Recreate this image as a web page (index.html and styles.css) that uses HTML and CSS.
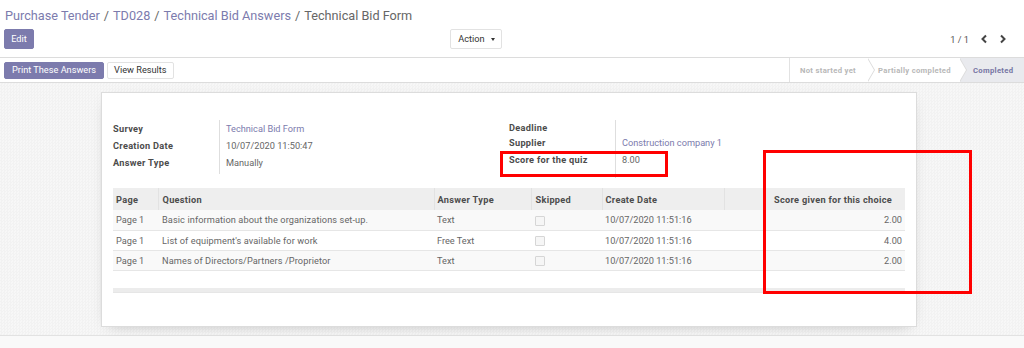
FILE: index.html
```html
<!DOCTYPE html>
<html>
<head>
<meta charset="utf-8">
<link rel="stylesheet" href="styles.css">
</head>
<body>
<div class="cp">
  <ol class="breadcrumb">
    <li><a>Purchase Tender</a></li>
    <li class="sep">/</li>
    <li><a>TD028</a></li>
    <li class="sep">/</li>
    <li><a>Technical Bid Answers</a></li>
    <li class="sep">/</li>
    <li class="active">Technical Bid Form</li>
  </ol>
  <div class="cp-row">
    <div class="cp-left"><button class="btn btn-primary btn-edit">Edit</button></div>
    <button class="btn btn-secondary btn-action">Action <span class="caret"></span></button>
    <div class="pager">
      <span class="pager-value">1 / 1</span>
      <svg class="chev" width="8" height="10" viewBox="0 0 8 10"><polyline points="6,1.5 2.5,5 6,8.5" fill="none" stroke="#444" stroke-width="2"/></svg>
      <svg class="chev" width="8" height="10" viewBox="0 0 8 10"><polyline points="2,1.5 5.5,5 2,8.5" fill="none" stroke="#444" stroke-width="2"/></svg>
    </div>
  </div>
</div>
<div class="statusbar">
  <div class="sb-buttons">
    <button class="btn btn-primary btn-sm">Print These Answers</button>
    <button class="btn btn-secondary btn-sm btn-results">View Results</button>
  </div>
  <div class="sb-status">
    <span class="arrow first">Not started yet</span>
    <span class="arrow second">Partially completed</span>
    <span class="arrow current">Completed</span>
  </div>
</div>
<div class="form-bg">
  <div class="sheet">
    <div class="groups">
      <div class="group">
        <div class="grow h17"><div class="lbl">Survey</div><div class="val link">Technical Bid Form</div></div>
        <div class="grow h17"><div class="lbl">Creation Date</div><div class="val">10/07/2020 11:50:47</div></div>
        <div class="grow h17"><div class="lbl">Answer Type</div><div class="val">Manually</div></div>
        <div class="grow h3"><div class="lbl"></div><div class="val"></div></div>
      </div>
      <div class="group">
        <div class="grow h14"><div class="lbl">Deadline</div><div class="val"></div></div>
        <div class="grow h16"><div class="lbl">Supplier</div><div class="val link">Construction company 1</div></div>
        <div class="grow h18"><div class="lbl">Score for the quiz</div><div class="val">8.00</div></div>
        <div class="grow h10"><div class="lbl"></div><div class="val"></div></div>
      </div>
    </div>
    <table class="list">
      <colgroup>
        <col class="c-page"><col class="c-question"><col class="c-type"><col class="c-skip"><col class="c-date"><col class="c-blank"><col>
      </colgroup>
      <thead>
        <tr><th>Page</th><th>Question</th><th>Answer Type</th><th>Skipped</th><th>Create Date</th><th></th><th class="noline">Score given for this choice</th></tr>
      </thead>
      <tbody>
        <tr><td>Page 1</td><td>Basic information about the organizations set-up.</td><td>Text</td><td><span class="cb"></span></td><td>10/07/2020 11:51:16</td><td></td><td class="num">2.00</td></tr>
        <tr><td>Page 1</td><td>List of equipment's available for work</td><td>Free Text</td><td><span class="cb"></span></td><td>10/07/2020 11:51:16</td><td></td><td class="num">4.00</td></tr>
        <tr><td>Page 1</td><td>Names of Directors/Partners /Proprietor</td><td>Text</td><td><span class="cb"></span></td><td>10/07/2020 11:51:16</td><td></td><td class="num">2.00</td></tr>
        <tr class="empty"><td colspan="7"></td></tr>
      </tbody>
      <tfoot><tr><td colspan="7"></td></tr></tfoot>
    </table>
  </div>
</div>
<div class="below"></div>
<div class="mark mark-quiz"></div>
<div class="mark mark-score"></div>
</body>
</html>
```
FILE: styles.css
```css
* { box-sizing: border-box; }
html, body { margin: 0; padding: 0; }
body {
  width: 1024px;
  height: 348px;
  overflow: hidden;
  font-family: Roboto, "Liberation Sans", sans-serif;
  font-size: 9.2px;
  color: #666;
  background: #f9f9f9;
  position: relative;
}
th, .lbl { letter-spacing: 0.3px; }
.list td:nth-child(2) { letter-spacing: 0.1px; }
.cp {
  background: #fff;
  height: 58px;
  border-bottom: 1px solid #dcdcdc;
  padding: 5px 4px 0 4px;
}
.breadcrumb {
  list-style: none;
  margin: 0;
  padding: 0 0 0 1px;
  display: flex;
  height: 20px;
  align-items: center;
  font-size: 12.7px;
}
.breadcrumb li { color: #666; }
.breadcrumb li a { color: #7c7bad; }
.breadcrumb .sep { padding: 0 4px; color: #666; }
.cp-row {
  display: flex;
  align-items: center;
  margin-top: 4px;
  height: 20px;
}
.cp-left { width: 446px; }
.btn {
  font-family: inherit;
  font-size: 9.2px;
  border-radius: 2px;
  border: 1px solid transparent;
  padding: 0 6px;
  line-height: 1;
  cursor: pointer;
}
.btn-primary { background: #7c7bad; color: #fff; border-color: #7c7bad; }
.btn-secondary { background: #fff; color: #333; border-color: #e2e2e2; }
.btn-edit { height: 20px; width: 30px; padding: 0; }
.btn-action { height: 20px; width: 52px; padding: 0 0 0 1px; display: flex; align-items: center; justify-content: center; gap: 6px; }
.caret {
  width: 0; height: 0;
  border-left: 2.5px solid transparent;
  border-right: 2.5px solid transparent;
  border-top: 3px solid #333;
}
.pager {
  margin-left: auto;
  display: flex;
  align-items: center;
  padding-right: 13px;
  color: #555;
}
.pager-value { margin-right: 11px; }
.chev { display: block; }
.chev + .chev { margin-left: 11px; }

.statusbar {
  display: flex;
  align-items: center;
  height: 25px;
  background: #fff;
  border-bottom: 1px solid #dcdcdc;
  padding-left: 4px;
}
.sb-buttons { display: flex; gap: 3px; }
.btn-sm { height: 17px; padding: 0 7px; }
.btn-results { padding: 0 6px; }
.sb-status {
  margin-left: auto;
  display: flex;
  height: 24px;
  align-self: flex-start;
}
.arrow {
  position: relative;
  display: flex;
  align-items: center;
  height: 24px;
  font-size: 7.7px;
  font-weight: bold;
  letter-spacing: 0.3px;
  color: #b8b8b8;
  background: #fff;
}
.arrow.first { border-left: 1px solid #e2e2e2; width: 79px; padding-left: 10px; }
.arrow.second { width: 92px; padding-left: 10px; }
.arrow.current { flex: 1; width: 64px; background: #e9eaee; color: #7675a3; padding-left: 13px; }
.arrow.first::before, .arrow.first::after,
.arrow.second::before, .arrow.second::after {
  content: "";
  position: absolute;
  top: 0;
  height: 24px;
  width: 7px;
  clip-path: polygon(0 0, 100% 50%, 0 100%);
}
.arrow.first::before, .arrow.second::before { right: -7px; background: #dcdcdc; z-index: 1; }
.arrow.first::after, .arrow.second::after { right: -6px; background: #fff; z-index: 2; }

.form-bg {
  height: 253px;
  border-bottom: 1px solid #e2e2e2;
  background-color: #f4f4f4;
  background-image: repeating-conic-gradient(#f2f2f2 0 25%, #f7f7f7 0 50%);
  background-size: 3px 3px;
  padding: 9px 0 0 101px;
}
.sheet {
  width: 816px;
  height: 235px;
  background: #fff;
  border: 1px solid #dcdcdc;
  box-shadow: 0 4px 14px -8px rgba(0,0,0,0.35);
  padding: 27px 10px 0 11px;
}
.groups {
  display: grid;
  grid-template-columns: 396px 396px;
}
.grow { display: flex; }
.lbl {
  width: 107px;
  border-right: 1px solid #dedede;
  font-weight: bold;
  color: #4c4c4c;
  display: flex;
  align-items: center;
}
.val {
  padding-left: 6px;
  display: flex;
  align-items: center;
}
.link { color: #7c7bad; }
.h17 { height: 17px; }
.h14 { height: 14px; }
.h16 { height: 16px; }
.h18 { height: 18px; }
.h10 { height: 10px; }
.h3 { height: 3px; }

.list {
  margin-top: 10px;
  width: 792px;
  border-collapse: collapse;
  table-layout: fixed;
}
.c-page { width: 45px; }
.c-question { width: 276px; }
.c-type { width: 97px; }
.c-skip { width: 71px; }
.c-date { width: 122px; }
.c-blank { width: 44px; }
.list th {
  height: 22px;
  background: #eeeeee;
  text-align: left;
  font-weight: bold;
  color: #4c4c4c;
  padding: 0 3px;
  border-left: 1px solid #e2e2e2;
  white-space: nowrap;
}
.list th:first-child { border-left: none; }
.list th.noline { border-left: none; padding-left: 6px; }
.list td {
  height: 20px;
  padding: 0 3px;
  border-bottom: 1px solid #e6e6e6;
  white-space: nowrap;
}
.list th:nth-child(2), .list td:nth-child(2) { padding-left: 4px; }
.list td:nth-child(4), .list th:nth-child(4) { padding-left: 4px; }
.list tbody tr:nth-child(odd) td { background: #f9f9f9; }
.list tbody tr.empty td { height: 18px; border-bottom: none; background: #fff; }
.list tfoot td { height: 4px; padding: 0; background: #ececec; }
.list td.num { text-align: right; padding-right: 3px; }
.cb {
  display: inline-block;
  width: 10px;
  height: 10px;
  border: 1px solid #d6d6d6;
  background: #f6f6f6;
  border-radius: 1px;
  vertical-align: middle;
}
.below { height: 12px; background: #f9f9f9; }

.mark {
  position: absolute;
  border: 3px solid #f00;
}
.mark-quiz { left: 500px; top: 151px; width: 168px; height: 26px; }
.mark-score { left: 763px; top: 150px; width: 209px; height: 144px; }
```
